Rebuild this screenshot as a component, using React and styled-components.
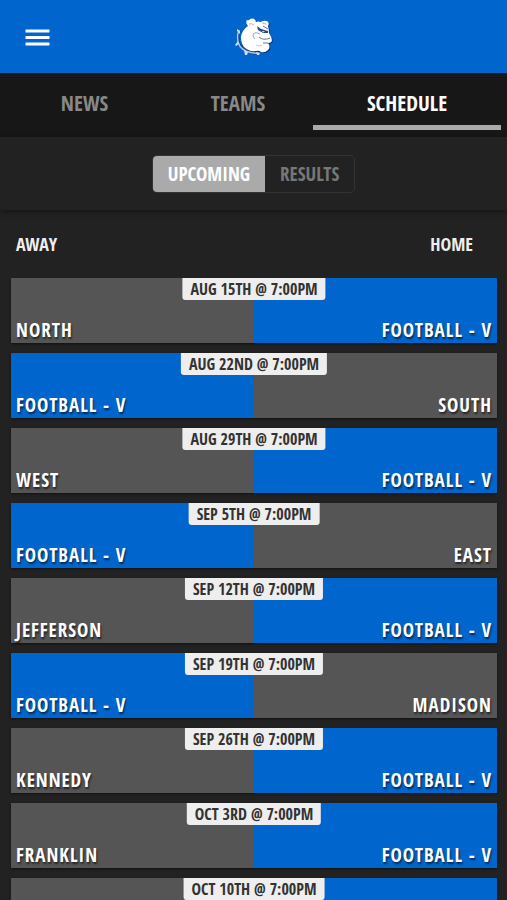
import styled, { createGlobalStyle } from 'styled-components'
import { useState } from 'react'

const TEAM = 'Football - V'

const TABS = ['News', 'Teams', 'Schedule']

const FILTERS = ['Upcoming', 'Results']

// a game without an opponent is still to be announced
const GAMES = [
  { date: 'Aug 15th @ 7:00pm', opponent: 'North', home: true },
  { date: 'Aug 22nd @ 7:00pm', opponent: 'South', home: false },
  { date: 'Aug 29th @ 7:00pm', opponent: 'West', home: true },
  { date: 'Sep 5th @ 7:00pm', opponent: 'East', home: false },
  { date: 'Sep 12th @ 7:00pm', opponent: 'Jefferson', home: true },
  { date: 'Sep 19th @ 7:00pm', opponent: 'Madison', home: false },
  { date: 'Sep 26th @ 7:00pm', opponent: 'Kennedy', home: true },
  { date: 'Oct 3rd @ 7:00pm', opponent: 'Franklin', home: true },
  { date: 'Oct 10th @ 7:00pm', opponent: null, home: true },
]

const GlobalStyle = createGlobalStyle`
* {
  box-sizing: border-box;
}
body {
  margin: 0;
  background-color: #222;
  color: #FFF;
  font-family: 'Open Sans Condensed', 'Noto Sans Condensed', 'Open Sans', sans-serif;
  font-weight: 700;
}
button {
  font: inherit;
  text-transform: uppercase;
  cursor: pointer;
}
`

const Page = styled.div`
height: 100vh;
display: flex;
flex-direction: column;
overflow: hidden;
`

const Header = styled.header`
flex: none;
height: 73px;
padding: 0 24px;
display: grid;
grid-template-columns: 1fr auto 1fr;
align-items: center;
background-color: #0066CE;
`

const MenuButton = styled.button`
justify-self: start;
display: flex;
padding: 0;
border: 0;
background: none;
`

const TabBar = styled.nav`
flex: none;
height: 64px;
padding: 0 6px;
display: grid;
grid-template-columns: 157fr 150fr 188fr;
background-color: #171717;
`

const Tab = styled.button`
height: 57px;
padding: 8px 0 0;
border: 0;
border-bottom: 5px solid ${props => props.$active ? '#AAA' : 'transparent'};
background: none;
color: ${props => props.$active ? '#FFF' : '#888'};
font-size: 21px;
line-height: 24px;
`

const FilterBar = styled.div`
flex: none;
height: 73px;
display: flex;
justify-content: center;
align-items: center;
box-shadow: 0 2px 6px rgba(0, 0, 0, .4);
`

const FilterGroup = styled.div`
display: flex;
height: 38px;
border: 1px solid #333;
border-radius: 5px;
overflow: hidden;
`

const FilterButton = styled.button`
padding: 0 15px;
border: 0;
background-color: ${props => props.$active ? '#AAA' : 'transparent'};
color: ${props => props.$active ? '#FFF' : '#777'};
font-size: 19px;
`

const Columns = styled.div`
flex: none;
height: 68px;
padding: 0 34px 0 16px;
display: flex;
justify-content: space-between;
align-items: center;
color: #EEE;
font-size: 18px;
text-transform: uppercase;
`

const GameList = styled.ul`
flex: 1;
min-height: 0;
margin: 0;
padding: 0 10px 0 11px;
display: flex;
flex-direction: column;
gap: 10px;
list-style: none;
overflow-y: auto;
scrollbar-width: none;
`

const Game = styled.li`
position: relative;
flex: none;
height: 65px;
display: grid;
grid-template-columns: 1fr 1fr;
box-shadow: 0 1px 2px rgba(0, 0, 0, .5);
`

const Side = styled.div`
display: flex;
align-items: flex-end;
justify-content: ${props => props.$right ? 'flex-end' : 'flex-start'};
padding: 0 5px;
background-color: ${props => props.$own ? '#0066CE' : '#555'};
font-size: 19px;
line-height: 26px;
letter-spacing: 1px;
text-transform: uppercase;
text-shadow: 1px 2px 2px rgba(0, 0, 0, .6);
`

const GameDate = styled.time`
position: absolute;
top: 0;
left: 50%;
transform: translateX(-50%);
padding: 0 8px;
border-radius: 0 0 3px 3px;
background-color: #EEE;
color: #333;
font-size: 16px;
line-height: 22px;
text-transform: uppercase;
white-space: nowrap;
`

function MenuIcon() {
  return (
    <svg width="26" height="26" viewBox="0 0 26 26" fill="#FFF" aria-hidden="true">
      <rect x="1.5" y="5.5" width="24" height="3" rx=".5" />
      <rect x="1.5" y="12" width="24" height="3" rx=".5" />
      <rect x="1.5" y="18.5" width="24" height="3" rx=".5" />
    </svg>
  )
}

const HEAD = `M13 9 Q10 5 12 3 Q14 4 15 2 Q20 0 21 5 Q23 4 26 5 Q28 3 32 4 Q35 6 33 9
Q34 12 34 16 Q37 20 37 24 Q36 26 33 26 Q36 30 33 33 Q30 36 26 35 Q24 33 21 34
Q14 35 9 30 Q6 26 6 20 Q7 13 13 9Z`

function BulldogLogo() {
  return (
    <svg width="38" height="40" viewBox="0 0 38 40" role="img" aria-label="Bulldogs">
      <path d={HEAD} transform="translate(1 1)" fill="#0A2F66" opacity=".8" />
      {/* spiked collar */}
      <path d="M4.500 13Q1 22 5.500 29Q11 36 24 36" fill="none" stroke="#123A7A" strokeWidth="3" opacity=".7" />
      <path d="M4 13Q.500 22 5 29.500Q10 36 24 36.500" fill="none" stroke="#B4C2DA" strokeWidth="1.500" />
      <path d="M5 17l-3-3 0-2 3 2zM4 27l-3 2-1-1 3-4zM9 33l4 2-1 3-2 0zM21 35l4 1-1 2-2 0z" fill="#D5DEED" />
      <path d={HEAD} fill="#FFF" />
      <path d="M14 7Q17 6 19 8M27 6l4 1" fill="none" stroke="#A9B8D3" />
      {/* brow and eye */}
      <path d="M22 9l4 3 7 2 0 2-5 0-5-3z" fill="#234A8C" />
      <path d="M28 9l5 3" fill="none" stroke="#5C79AF" />
      <path d="M27 14l3 .500-2 1z" fill="#FFF" />
      {/* muzzle and jaw */}
      <path d="M25 17Q19 14 18 18Q18 20 20 22" fill="none" stroke="#8EA3CA" />
      <path d="M24 20Q28 24 35 21M28 26l5 0" fill="none" stroke="#5C79AF" />
      <path d="M21 28Q24 30 27 28" fill="none" stroke="#C3CEE2" />
    </svg>
  )
}

function GameRow(props) {
  const { game } = props
  const own = game.opponent && TEAM
  return (
    <Game>
      <Side $own={!game.home}>{game.home ? game.opponent : own}</Side>
      <Side $right $own={game.home}>{game.home ? own : game.opponent}</Side>
      <GameDate>{game.date}</GameDate>
    </Game>
  )
}

function App() {
  const [tab, setTab] = useState('Schedule')
  const [filter, setFilter] = useState('Upcoming')

  return (
    <Page>
      <GlobalStyle />
      <Header>
        <MenuButton aria-label="Menu"><MenuIcon /></MenuButton>
        <BulldogLogo />
      </Header>
      <TabBar>
        {TABS.map(name => (
          <Tab key={name} $active={name === tab} onClick={() => setTab(name)}>{name}</Tab>
        ))}
      </TabBar>
      <FilterBar>
        <FilterGroup>
          {FILTERS.map(name => (
            <FilterButton key={name} $active={name === filter} onClick={() => setFilter(name)}>{name}</FilterButton>
          ))}
        </FilterGroup>
      </FilterBar>
      <Columns>
        <span>Away</span>
        <span>Home</span>
      </Columns>
      <GameList>
        {GAMES.map(game => <GameRow key={game.date} game={game} />)}
      </GameList>
    </Page>
  )
}

export default App
